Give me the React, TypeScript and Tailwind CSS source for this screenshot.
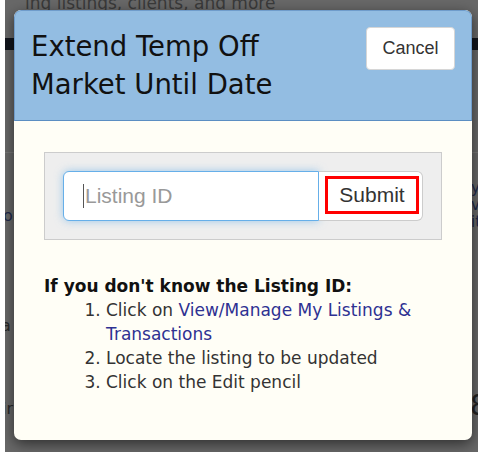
import React from "react";

const verdana = { fontFamily: '"DejaVu Sans", Verdana, sans-serif' };
const arial = { fontFamily: '"Liberation Sans", Arial, sans-serif' };

export default function App() {
  return (
    <div className="w-[483px] h-[458px] bg-white overflow-hidden">
      <div className="ml-[5px] w-[473px] h-[452px] bg-[#686868] relative overflow-hidden">
        {/* Page behind the dim overlay */}
        <div className="absolute left-[20px] top-[-9px] text-[17px] text-[#3a3a3a]" style={verdana}>
          ing listings, clients, and more
        </div>
        <div className="absolute left-0 right-0 top-[38px] h-[12px] bg-[#12151c]" />
        <div className="absolute left-0 right-0 top-[152px] h-px bg-[#777]" />
        <div className="absolute left-[-2px] top-[204px] text-[16px] text-[#1f2a4a]" style={verdana}>or</div>
        <div className="absolute left-[-4px] top-[314px] text-[16px] text-[#2a2a2a]" style={verdana}>a</div>
        <div className="absolute left-[-3px] top-[397px] text-[16px] text-[#2a2a2a]" style={verdana}>ir</div>
        <div className="absolute left-[466px] top-[180px] text-[15px] leading-[17px] text-[#1f2a4a]" style={verdana}>
          y<br />v<br />it
        </div>
        <div className="absolute left-[465px] top-[385px] text-[28px] text-[#222]" style={verdana}>8</div>

        {/* Modal */}
        <div className="absolute left-[9px] top-[10px] w-[458px] h-[430px] rounded-[7px] bg-[#fffef6] overflow-hidden shadow-[0_4px_14px_rgba(0,0,0,0.55)]">
          <div className="h-[111px] bg-[#93bde2] border border-b-[#5b8ec2] border-[#6f9ccb] rounded-t-[7px] flex justify-between pl-[16px] pr-[16px] pt-[16px]">
            <h1 className="text-[27.5px] leading-[38px] text-[#111]" style={verdana}>
              Extend Temp Off
              <br />
              Market Until Date
            </h1>
            <button
              className="mt-0 w-[89px] h-[43px] bg-white rounded-[4px] border border-[#d6d6d6] text-[18px] text-[#333]"
              style={arial}
            >
              Cancel
            </button>
          </div>

          <div className="px-[30px] pt-[31px]">
            <div className="bg-[#eeeeee] border border-[#cccccc] p-[18px] flex">
              <div className="flex-1 h-[50px] bg-white border border-[#66afe9] rounded-l-[6px] shadow-[0_0_8px_rgba(102,175,233,0.6)] flex items-center pl-[19px]">
                <span className="w-px h-[24px] bg-[#555] mr-[1px]" />
                <span className="text-[21px] text-[#999]" style={arial}>
                  Listing ID
                </span>
              </div>
              <button className="w-[104px] h-[50px] bg-white border border-l-0 border-[#cccccc] rounded-r-[6px] pl-[6px] pt-[4px] flex items-start">
                <span
                  className="w-[94px] h-[38px] border-[3px] border-[#ff0000] flex items-center justify-center text-[21px] text-[#333]"
                  style={arial}
                >
                  Submit
                </span>
              </button>
            </div>

            <div className="mt-[34px] text-[17px] leading-[24px] text-[#111]" style={verdana}>
              <p className="font-bold">If you don't know the Listing ID:</p>
              <ol className="list-decimal pl-[62px] text-[#333]">
                <li>
                  Click on{" "}
                  <a className="text-[#2e3192]">View/Manage My Listings &amp; Transactions</a>
                </li>
                <li>Locate the listing to be updated</li>
                <li>Click on the Edit pencil</li>
              </ol>
            </div>
          </div>
        </div>
      </div>
    </div>
  );
}
